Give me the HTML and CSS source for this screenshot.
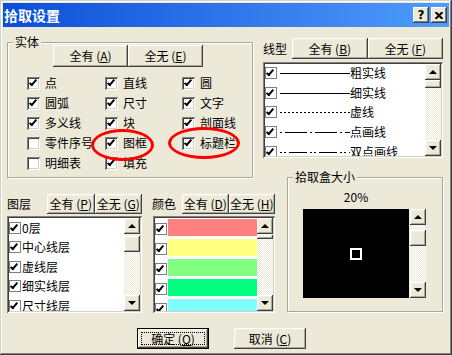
FILE: index.html
```html
<!DOCTYPE html>
<html>
<head>
  <meta charset="utf-8">
  <title>拾取设置</title>
  <link rel="stylesheet" href="styles.css">
</head>
<body>
  <div class="window">
    <div class="titlebar">
      <span class="title">拾取设置</span>
      <div class="caption-buttons">
        <span class="cap-btn">?</span>
        <span class="cap-btn"><svg width="8" height="7" viewBox="0 0 8 7"><path d="M0.5 0 L7.5 7 M7.5 0 L0.5 7"/></svg></span>
      </div>
    </div>

    <div class="content">
      <div class="top-row">
        <div class="group entity">
          <span class="group-label">实体</span>
          <div class="button-pair">
            <span class="btn entity-btn">全有 (<u>A</u>)</span>
            <span class="btn entity-btn">全无 (<u>E</u>)</span>
          </div>
          <div class="entity-grid">
            <span class="check"><span class="cb on"></span>点</span>
            <span class="check"><span class="cb on"></span>直线</span>
            <span class="check"><span class="cb on"></span>圆</span>
            <span class="check"><span class="cb on"></span>圆弧</span>
            <span class="check"><span class="cb on"></span>尺寸</span>
            <span class="check"><span class="cb on"></span>文字</span>
            <span class="check"><span class="cb on"></span>多义线</span>
            <span class="check"><span class="cb on"></span>块</span>
            <span class="check"><span class="cb on"></span>剖面线</span>
            <span class="check"><span class="cb"></span>零件序号</span>
            <span class="check"><span class="cb on"></span>图框</span>
            <span class="check"><span class="cb on"></span>标题栏</span>
            <span class="check"><span class="cb"></span>明细表</span>
            <span class="check"><span class="cb on"></span>填充</span>
          </div>
          <span class="ring ring-frame"></span>
          <span class="ring ring-title"></span>
        </div>

        <div class="linetype">
          <div class="list-head">
            <span class="list-label linetype-label">线型</span>
            <span class="btn linetype-btn">全有 (<u>B</u>)</span>
            <span class="btn linetype-btn">全无 (<u>F</u>)</span>
          </div>
          <div class="listbox linetype-list">
            <div class="list-items">
              <div class="list-row"><span class="cb small on"></span><svg class="stroke" width="70" height="10"><line x1="0" y1="5.5" x2="70" y2="5.5"/></svg>粗实线</div>
              <div class="list-row"><span class="cb small on"></span><svg class="stroke" width="70" height="10"><line x1="0" y1="5.5" x2="70" y2="5.5"/></svg>细实线</div>
              <div class="list-row"><span class="cb small on"></span><svg class="stroke dash" width="70" height="10"><line x1="0" y1="5.5" x2="70" y2="5.5"/></svg>虚线</div>
              <div class="list-row"><span class="cb small on"></span><svg class="stroke dash-dot" width="70" height="10"><line x1="0" y1="5.5" x2="70" y2="5.5"/></svg>点画线</div>
              <div class="list-row"><span class="cb small on"></span><svg class="stroke dash-dot-dot" width="70" height="10"><line x1="0" y1="5.5" x2="70" y2="5.5"/></svg>双点画线</div>
            </div>
            <div class="vscroll">
              <span class="sb-btn up"></span>
              <span class="sb-track"><span class="sb-thumb linetype-thumb"></span></span>
              <span class="sb-btn down"></span>
            </div>
          </div>
        </div>
      </div>

      <div class="bottom-row">
        <div class="layer-col">
          <div class="list-head">
            <span class="list-label layer-label">图层</span>
            <span class="btn small-btn">全有 (<u>P</u>)</span>
            <span class="btn small-btn">全无 (<u>G</u>)</span>
          </div>
          <div class="listbox low-list">
            <div class="list-items">
              <div class="list-row tight"><span class="cb small on"></span>0层</div>
              <div class="list-row tight"><span class="cb small on"></span>中心线层</div>
              <div class="list-row tight"><span class="cb small on"></span>虚线层</div>
              <div class="list-row tight"><span class="cb small on"></span>细实线层</div>
              <div class="list-row tight"><span class="cb small on"></span>尺寸线层</div>
            </div>
            <div class="vscroll">
              <span class="sb-btn up"></span>
              <span class="sb-track"><span class="sb-thumb layer-thumb"></span></span>
              <span class="sb-btn down"></span>
            </div>
          </div>
        </div>

        <div class="color-col">
          <div class="list-head">
            <span class="list-label color-label">颜色</span>
            <span class="btn small-btn">全有 (<u>D</u>)</span>
            <span class="btn small-btn">全无 (<u>H</u>)</span>
          </div>
          <div class="listbox low-list color-list">
            <div class="list-items">
              <div class="list-row swatch-row"><span class="cb small on"></span><span class="swatch red"></span></div>
              <div class="list-row swatch-row"><span class="cb small on"></span><span class="swatch yellow"></span></div>
              <div class="list-row swatch-row"><span class="cb small on"></span><span class="swatch green"></span></div>
              <div class="list-row swatch-row"><span class="cb small on"></span><span class="swatch spring"></span></div>
              <div class="list-row swatch-row"><span class="cb small on"></span><span class="swatch cyan"></span></div>
            </div>
            <div class="vscroll">
              <span class="sb-btn up"></span>
              <span class="sb-track"><span class="sb-thumb color-thumb"></span></span>
              <span class="sb-btn down"></span>
            </div>
          </div>
        </div>

        <div class="group pickbox">
          <span class="group-label">拾取盒大小</span>
          <div class="pick-body">
            <div class="pick-preview">
              <div class="pick-value">20%</div>
              <div class="pick-canvas"><span class="pick-square"></span></div>
            </div>
            <div class="vscroll pick-scroll">
              <span class="sb-btn up"></span>
              <span class="sb-track"><span class="sb-thumb pick-thumb"></span></span>
              <span class="sb-btn down"></span>
            </div>
          </div>
        </div>
      </div>

      <div class="footer">
        <span class="btn dialog-btn default"><span class="focus">确定 (<u>O</u>)</span></span>
        <span class="btn dialog-btn">取消 (<u>C</u>)</span>
      </div>
    </div>
  </div>
</body>
</html>
```

FILE: styles.css
```css
* {
  box-sizing: border-box;
}
body {
  margin: 0;
  font-family: "Noto Sans CJK SC", "Noto Sans", sans-serif;
  font-size: 12px;
  color: #000;
  background: #ece9d8;
}
u {
  text-decoration: underline;
  text-underline-offset: 1px;
}
.window {
  position: relative;
  width: 452px;
  height: 355px;
  padding: 3px;
  background: #ece9d8;
  box-shadow: inset -1px -1px #404040, inset 1px 1px #d4d0c8, inset -2px -2px #808080, inset 2px 2px #fff;
}
.titlebar {
  display: flex;
  justify-content: space-between;
  align-items: center;
  height: 24px;
  padding: 0 2px 0 1px;
  background: linear-gradient(to right, #0a4fd8, #4f9dfc);
  color: #fff;
}
.title {
  font-size: 14px;
  font-weight: bold;
  line-height: 16px;
}
.caption-buttons {
  display: flex;
  gap: 2px;
}
.cap-btn {
  display: flex;
  align-items: center;
  justify-content: center;
  width: 16px;
  height: 16px;
  background: #ece9d8;
  color: #000;
  font-family: "DejaVu Sans", sans-serif;
  font-size: 12px;
  font-weight: bold;
  line-height: 1;
  box-shadow: inset -1px -1px #404040, inset 1px 1px #fff, inset -2px -2px #808080;
}
.cap-btn svg {
  stroke: #000;
  stroke-width: 2;
}
.content {
  padding: 11px 0 0 4px;
}

/* shared controls */
.btn {
  display: flex;
  align-items: center;
  justify-content: center;
  height: 21px;
  background: #ece9d8;
  line-height: 14px;
  white-space: nowrap;
  box-shadow: inset -1px -1px #404040, inset 1px 1px #fff, inset -2px -2px #aca899, inset 2px 2px #f1efe2;
}
.group {
  position: relative;
  border: 1px solid #aca899;
  box-shadow: inset 1px 1px #fff, 1px 1px #fff;
}
.group-label {
  position: absolute;
  top: -8px;
  left: 5px;
  padding: 0 2px;
  background: #ece9d8;
  line-height: 14px;
}
.check {
  display: flex;
  align-items: center;
  gap: 5px;
  line-height: 14px;
  white-space: nowrap;
}
.cb {
  position: relative;
  flex: none;
  width: 13px;
  height: 13px;
  background: #fff;
  box-shadow: inset 1px 1px #808080, inset -1px -1px #fff, inset 2px 2px #404040, inset -2px -2px #d4d0c8;
}
.cb.small {
  width: 12px;
  height: 12px;
  box-shadow: inset 0 0 0 1px #808080;
}
.cb.on::after {
  content: "";
  position: absolute;
  left: 4px;
  top: 1px;
  box-sizing: content-box;
  width: 2px;
  height: 6px;
  border: solid #000;
  border-width: 0 2px 2px 0;
  transform: rotate(40deg);
}
.cb.small.on::after {
  left: 3px;
  top: 1px;
}
.ring {
  position: absolute;
  border: 3px solid #f00;
  border-radius: 50%;
}
.ring-frame {
  left: 83px;
  top: 86px;
  width: 63px;
  height: 32px;
}
.ring-title {
  left: 160px;
  top: 84px;
  width: 72px;
  height: 32px;
}

/* list boxes */
.list-head {
  display: flex;
  align-items: center;
  height: 21px;
}
.listbox {
  display: flex;
  padding: 2px;
  overflow: hidden;
  background: #fff;
  box-shadow: inset 1px 1px #808080, inset -1px -1px #fff, inset 2px 2px #404040, inset -2px -2px #d4d0c8;
}
.list-items {
  flex: 1;
  overflow: hidden;
}
.list-row {
  display: flex;
  align-items: center;
  height: 20px;
  line-height: 14px;
  white-space: nowrap;
}
.list-row .cb {
  margin-right: 3px;
}
.list-row.tight {
  height: 19.5px;
}
.list-row.tight .cb {
  margin-right: 1px;
}
.stroke {
  flex: none;
  stroke: #000;
  stroke-width: 1;
}
.stroke.dash {
  stroke-dasharray: 2 2;
}
.stroke.dash-dot {
  stroke-dasharray: 2 3 22 3;
}
.stroke.dash-dot-dot {
  stroke-dasharray: 2 2 2 3 18 3;
}
.vscroll {
  display: flex;
  flex-direction: column;
  flex: none;
  width: 16px;
}
.sb-btn {
  display: flex;
  align-items: center;
  justify-content: center;
  flex: none;
  height: 16px;
  background: #ece9d8;
  box-shadow: inset -1px -1px #404040, inset 1px 1px #fff, inset -2px -2px #aca899, inset 2px 2px #f1efe2;
}
.sb-btn::after {
  content: "";
  border-left: 4px solid transparent;
  border-right: 4px solid transparent;
}
.sb-btn.up::after {
  border-bottom: 4px solid #000;
}
.sb-btn.down::after {
  border-top: 4px solid #000;
}
.sb-track {
  flex: 1;
  background: repeating-conic-gradient(#fff 0 25%, #ece9d8 0 50%) 0 0 / 2px 2px;
}
.sb-thumb {
  display: block;
  background: #ece9d8;
  box-shadow: inset -1px -1px #404040, inset 1px 1px #fff, inset -2px -2px #aca899, inset 2px 2px #f1efe2;
}

/* top row */
.top-row {
  display: flex;
  align-items: flex-start;
}
.entity {
  width: 246px;
  height: 136px;
  margin-top: 4px;
}
.button-pair {
  display: flex;
  margin: 2px 0 0 45px;
}
.entity-btn {
  width: 75px;
  height: 22px;
}
.entity-grid {
  display: grid;
  grid-template-columns: 78px 77px 1fr;
  grid-auto-rows: 20px;
  margin-top: 6px;
  padding-left: 19px;
}
.linetype {
  width: 180px;
  margin-left: 10px;
}
.linetype-label {
  width: 29px;
}
.linetype-btn {
  flex: 1;
}
.linetype-list {
  height: 96px;
  margin-top: 3px;
}
.linetype-list .list-items {
  margin-top: -1px;
}
.linetype-list .list-row {
  height: 19.75px;
}
.linetype-thumb {
  height: 8px;
}

/* bottom row */
.bottom-row {
  display: flex;
  align-items: flex-start;
  margin-top: -1px;
}
.layer-col {
  width: 135px;
  margin-top: 16px;
}
.layer-label {
  width: 40px;
}
.small-btn {
  flex: 1;
  height: 20px;
}
.low-list {
  height: 97px;
  margin-top: 2px;
}
.layer-thumb {
  height: 16px;
  margin-top: 2px;
}
.color-col {
  width: 123px;
  margin-left: 10px;
  margin-top: 16px;
}
.color-label {
  width: 30px;
}
.color-list {
  margin-left: 1px;
}
.color-thumb {
  height: 4px;
  margin-top: 1px;
}
.swatch-row {
  align-items: flex-start;
}
.swatch-row .cb {
  margin: 5px 1px 0 0;
}
.swatch {
  flex: 1;
  height: 17px;
  margin-top: 1px;
}
.swatch.red { background: #ff8080; }
.swatch.yellow { background: #ffff80; }
.swatch.green { background: #80ff80; }
.swatch.spring { background: #00ff80; }
.swatch.cyan { background: #80ffff; }

.pickbox {
  width: 156px;
  height: 135px;
  margin-left: 12px;
}
.pick-body {
  display: flex;
  align-items: flex-end;
  padding: 12px 0 0 15px;
}
.pick-value {
  margin-bottom: 5px;
  line-height: 14px;
  text-align: center;
}
.pick-canvas {
  display: flex;
  align-items: center;
  justify-content: center;
  width: 106px;
  height: 89px;
  background: #000;
}
.pick-square {
  width: 12px;
  height: 12px;
  border: 2px solid #fff;
}
.pick-scroll {
  height: 89px;
  margin-left: 1px;
}
.pick-thumb {
  height: 16px;
  margin-top: 5px;
}

/* dialog buttons */
.footer {
  display: flex;
  gap: 25px;
  margin-top: 15px;
  padding-left: 130px;
}
.dialog-btn {
  width: 72px;
}
.dialog-btn.default {
  padding: 4px;
  box-shadow: inset 0 0 0 1px #000, inset -2px -2px #404040, inset 2px 2px #fff, inset -3px -3px #aca899, inset 3px 3px #f1efe2;
}
.focus {
  display: flex;
  align-items: center;
  justify-content: center;
  flex: 1;
  align-self: stretch;
  border: 1px dotted #000;
}
```
